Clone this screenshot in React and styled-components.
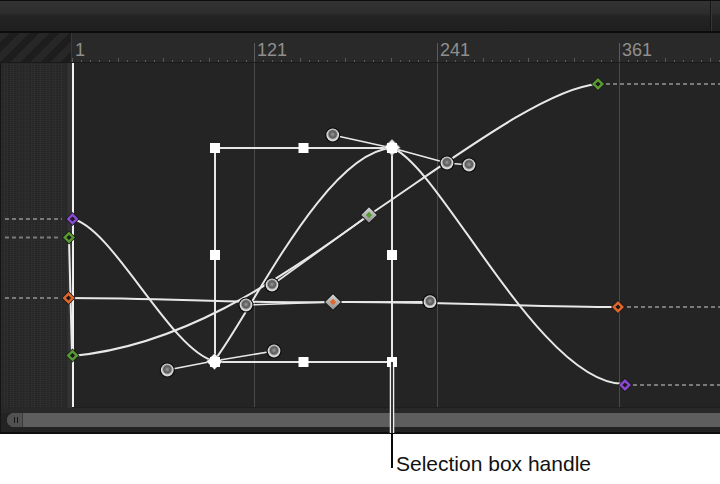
import React from 'react';
import styled, { createGlobalStyle } from 'styled-components';

const GlobalStyle = createGlobalStyle`
  html, body { margin: 0; padding: 0; background: #ffffff; }
  body { font-family: "Liberation Sans", Arial, sans-serif; }
`;

const Page = styled.div`
  position: relative;
  width: 720px;
  height: 484px;
  overflow: hidden;
  background: #ffffff;
`;

const Panel = styled.div`
  width: 720px;
  display: flex;
  flex-direction: column;
  background: #222222;
  border-top: 1px solid #0d0d0d;
  border-bottom: 2px solid #0e0e0e;
`;

const Header = styled.div`
  height: 30px;
  display: flex;
  border-bottom: 2px solid #0c0c0c;
  background: linear-gradient(to bottom, #333333 0%, #2d2d2d 40%, #232323 52%, #1f1f1f 100%);
`;

const HeaderFill = styled.div`
  flex: 1;
`;

const HeaderEnd = styled.div`
  width: 9px;
  border-left: 1px solid #151515;
  box-shadow: inset 1px 0 0 #363636;
`;

const Ruler = styled.div`
  height: 29px;
  display: flex;
  background: #292929;
  border-bottom: 1px solid #1a1a1a;
`;

const Corner = styled.div`
  width: 72px;
  box-sizing: border-box;
  border-right: 1px solid #383838;
  background: repeating-linear-gradient(135deg, #272727 0 7px, #1d1d1d 7px 14px);
`;

const Scale = styled.div`
  flex: 1;
  display: flex;
`;

const ScaleSegment = styled.div`
  box-sizing: border-box;
  width: ${(p) => (p.$w ? `${p.$w}px` : 'auto')};
  flex: ${(p) => (p.$w ? 'none' : '1')};
  padding: 8px 0 0 3px;
  font-size: 18px;
  line-height: 18px;
  color: #8f8f8f;
  background-image:
    linear-gradient(#5c5c5c, #5c5c5c),
    repeating-linear-gradient(to right, #5a5a5a 0 1px, transparent 1px 9.133px),
    repeating-linear-gradient(to right, #5a5a5a 0 1px, transparent 1px 45.67px);
  background-size: ${(p) => (p.$major ? '1px 19px' : '0 0')}, 100% 2px, 100% 4px;
  background-position: left bottom, left bottom, left bottom;
  background-repeat: no-repeat;
`;

const Body = styled.div`
  height: 345px;
  display: flex;
`;

const Strip = styled.div`
  width: 72px;
  box-sizing: border-box;
  border-left: 1px solid #141414;
  border-right: 4px solid #333333;
  background-color: #2b2b2b;
  background-image:
    repeating-linear-gradient(90deg, rgba(255, 255, 255, 0.025) 0 1px, transparent 1px 3px),
    repeating-linear-gradient(0deg, rgba(0, 0, 0, 0.09) 0 1px, transparent 1px 2px),
    repeating-linear-gradient(90deg, rgba(0, 0, 0, 0.06) 0 2px, transparent 2px 7px);
`;

const Graph = styled.div`
  flex: 1;
  display: flex;
  background: #242424;
  border-bottom: 1px solid #1e1e1e;
`;

const GridColumn = styled.div`
  box-sizing: border-box;
  width: ${(p) => (p.$w ? `${p.$w}px` : 'auto')};
  flex: ${(p) => (p.$w ? 'none' : '1')};
  border-left: ${(p) => (p.$playhead ? '2px solid #f0f0f0' : '1px solid #4a4a4a')};
`;

const ScrollBar = styled.div`
  height: 24px;
  box-sizing: border-box;
  padding: 5px 0 5px 6px;
  display: flex;
  border-left: 1px solid #151515;
  background: linear-gradient(to bottom, #282828 0 5px, #232323 5px);
`;

const Thumb = styled.div`
  flex: 1;
  display: flex;
  height: 14px;
  background: #5e5e5e;
  border-radius: 7px 0 0 7px;
`;

const ThumbCap = styled.div`
  width: 16px;
  box-sizing: border-box;
  display: flex;
  align-items: center;
  justify-content: center;
  padding-left: 2px;
  background: #515151;
  border-right: 1px solid #3c3c3c;
  border-radius: 7px 0 0 7px;
`;

const Grip = styled.div`
  width: 2px;
  height: 6px;
  border-left: 1.5px solid #161616;
  border-right: 1.5px solid #161616;
`;

const Caption = styled.div`
  padding: 18px 0 0 396px;
  font-size: 21px;
  line-height: 24px;
  color: #111111;
`;

const Overlay = styled.svg`
  position: absolute;
  left: 0;
  top: 0;
  width: 720px;
  height: 484px;
  pointer-events: none;
`;

const COLORS = { purple: '#8b47d6', green: '#5a9a32', orange: '#e0672b' };

const Key = ({ x, y, c }) => (
  <g>
    <polygon points={`${x},${y - 7} ${x + 7},${y} ${x},${y + 7} ${x - 7},${y}`} fill="#141414" />
    <polygon points={`${x},${y - 6} ${x + 6},${y} ${x},${y + 6} ${x - 6},${y}`} fill={COLORS[c]} />
    <polygon points={`${x},${y - 2.6} ${x + 2.6},${y} ${x},${y + 2.6} ${x - 2.6},${y}`} fill="#1a1a1a" />
  </g>
);

const SelKey = ({ x, y, c }) => (
  <g>
    <polygon points={`${x},${y - 9} ${x + 9},${y} ${x},${y + 9} ${x - 9},${y}`} fill="#111" />
    <polygon points={`${x},${y - 7.8} ${x + 7.8},${y} ${x},${y + 7.8} ${x - 7.8},${y}`} fill="url(#selKey)" />
    <polygon points={`${x},${y - 3.2} ${x + 3.2},${y} ${x},${y + 3.2} ${x - 3.2},${y}`} fill={COLORS[c]} />
  </g>
);

const WhiteKey = ({ x, y }) => (
  <polygon points={`${x},${y - 8} ${x + 8},${y} ${x},${y + 8} ${x - 8},${y}`} fill="#f4f4f4" stroke="#9a9a9a" strokeWidth="0.8" />
);

const Knob = ({ x, y }) => (
  <g>
    <circle cx={x} cy={y} r="7.6" fill="#0a0a0a" />
    <circle cx={x} cy={y} r="6.4" fill="url(#knob)" />
  </g>
);

const Handle = ({ x, y }) => <rect x={x - 5} y={y - 5} width="10" height="10" fill="#ffffff" />;

const rulerLabels = [
  { w: 182, label: '1', major: false },
  { w: 183, label: '121', major: true },
  { w: 182, label: '241', major: true },
  { w: 0, label: '361', major: true },
];

const knobs = [
  [332.7, 135], [447, 163], [469, 165], [272, 285], [246, 305], [430, 301.7], [167.3, 370], [274, 351],
];

const handleLines = [
  [332.7, 135, 392, 148], [392, 148, 447, 163], [447, 163, 469, 165], [167.3, 370, 214, 361],
  [214, 361, 274, 351], [246, 305, 333, 302], [333, 302, 430, 301.7], [272, 285, 369, 215],
];

const boxHandles = [
  [215, 148], [303.5, 148], [392, 148], [392, 255], [392, 362], [303.5, 362], [215, 362], [215, 255],
];

export default function App() {
  return (
    <Page>
      <GlobalStyle />
      <Panel>
        <Header>
          <HeaderFill />
          <HeaderEnd />
        </Header>
        <Ruler>
          <Corner />
          <Scale>
            {rulerLabels.map((s) => (
              <ScaleSegment key={s.label} $w={s.w} $major={s.major}>
                {s.label}
              </ScaleSegment>
            ))}
          </Scale>
        </Ruler>
        <Body>
          <Strip />
          <Graph>
            <GridColumn $w={182} $playhead />
            <GridColumn $w={183} />
            <GridColumn $w={182} />
            <GridColumn />
          </Graph>
        </Body>
        <ScrollBar>
          <Thumb>
            <ThumbCap>
              <Grip />
            </ThumbCap>
          </Thumb>
        </ScrollBar>
      </Panel>
      <Caption>Selection box handle</Caption>

      <Overlay viewBox="0 0 720 484">
        <defs>
          <radialGradient id="knob" cx="50%" cy="45%" r="55%">
            <stop offset="0%" stopColor="#9a9a9a" />
            <stop offset="30%" stopColor="#6e6e6e" />
            <stop offset="52%" stopColor="#5a5a5a" />
            <stop offset="66%" stopColor="#a8a8a8" />
            <stop offset="82%" stopColor="#e2e2e2" />
            <stop offset="100%" stopColor="#c4c4c4" />
          </radialGradient>
          <linearGradient id="selKey" x1="0" y1="0" x2="0" y2="1">
            <stop offset="0%" stopColor="#d6d6d6" />
            <stop offset="100%" stopColor="#8e8e8e" />
          </linearGradient>
        </defs>

        <g stroke="#7a7a7a" strokeWidth="2" strokeDasharray="4 3" fill="none">
          <path d="M5,219 H62" />
          <path d="M5,237.5 H59" />
          <path d="M5,298 H58" />
          <path d="M606,84 H720" />
          <path d="M627,307 H720" />
          <path d="M633,385 H720" />
        </g>

        <g stroke="#e8e8e8" strokeWidth="2" fill="none">
          <path d="M72,219 C112,226 170,350 214,361 C250,315 325,152 392,148 C440,165 540,384 624,384" />
          <path d="M72,356 C180,346 272,285 369,215 C447,163 545,88 598,84" />
          <path d="M68,298 C170,298 245,304 333,302 C430,301 530,307 618,307" />
          <path d="M69,238 C70,280 71,320 72,355" />
        </g>

        <g stroke="#e8e8e8" strokeWidth="1.6">
          {handleLines.map(([x1, y1, x2, y2], i) => (
            <line key={i} x1={x1} y1={y1} x2={x2} y2={y2} />
          ))}
        </g>

        <rect x="215" y="148" width="177" height="214" fill="none" stroke="#e6e6e6" strokeWidth="2" />

        {knobs.map(([x, y], i) => (
          <Knob key={i} x={x} y={y} />
        ))}

        <Key x={72.5} y={219} c="purple" />
        <Key x={625} y={385} c="purple" />
        <Key x={69} y={237.5} c="green" />
        <Key x={72.5} y={355.5} c="green" />
        <Key x={598} y={84} c="green" />
        <Key x={68.5} y={298} c="orange" />
        <Key x={618} y={307} c="orange" />

        <SelKey x={369} y={215} c="green" />
        <SelKey x={333} y={302} c="orange" />

        <WhiteKey x={392} y={147.5} />
        <WhiteKey x={214.5} y={361.5} />

        {boxHandles.map(([x, y], i) => (
          <Handle key={i} x={x} y={y} />
        ))}

        <line x1="392" y1="367" x2="392" y2="433" stroke="#f0f0f0" strokeWidth="4.5" />
        <line x1="392" y1="362" x2="392" y2="434" stroke="#0a0a0a" strokeWidth="1.6" />
        <line x1="392" y1="434" x2="392" y2="468" stroke="#0a0a0a" strokeWidth="2" />
      </Overlay>
    </Page>
  );
}
